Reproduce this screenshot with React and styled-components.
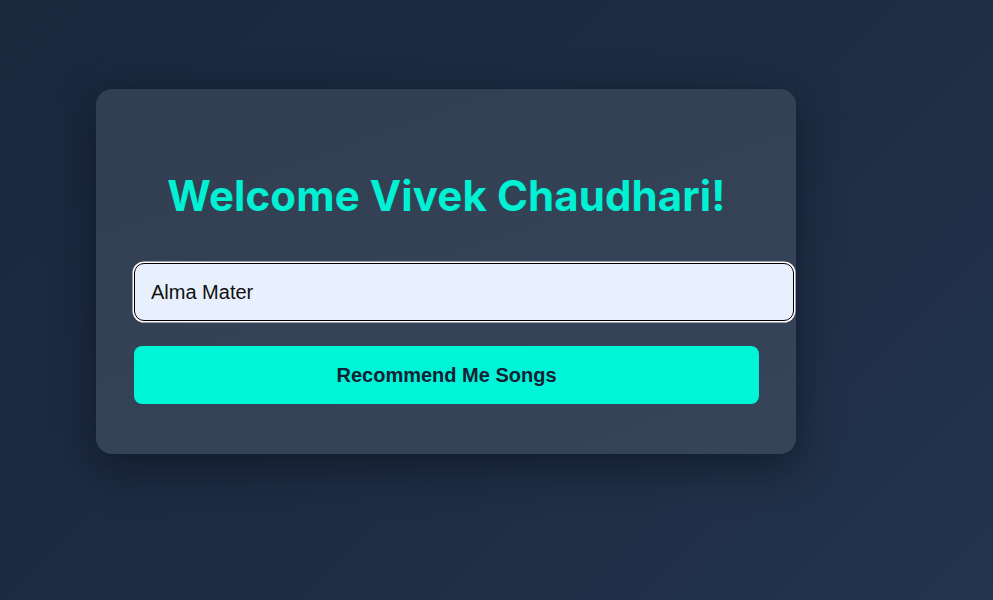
import styled, { createGlobalStyle } from "styled-components";

const GlobalStyle = createGlobalStyle`
  html, body {
    margin: 0;
    padding: 0;
  }
  body {
    min-height: 100vh;
    background: linear-gradient(135deg, #1a273d 0%, #1e2b42 50%, #23344d 100%);
    font-family: "Liberation Sans", Arial, sans-serif;
  }
`

const Page = styled.div`
  min-height: 100vh;
  box-sizing: border-box;
  padding: 89px 0 0 96px;
`
const Card = styled.div`
  width: 700px;
  box-sizing: border-box;
  padding: 38px 37px 50px 38px;
  border-radius: 16px;
  background: linear-gradient(160deg, #323f52 0%, #36445a 100%);
  box-shadow: 0 12px 40px rgba(8, 14, 26, 0.55);
  display: flex;
  flex-direction: column;
`
const Title = styled.h1`
  margin: 41px 0 0;
  height: 56px;
  line-height: 56px;
  font-family: Inter, "Noto Sans", sans-serif;
  font-size: 42px;
  font-weight: 700;
  letter-spacing: 0.1px;
  color: #00f0d4;
  text-align: center;
`
const Input = styled.input`
  margin-top: 39px;
  width: calc(100% + 35px);
  height: 58px;
  box-sizing: border-box;
  padding: 0 16px;
  border: 1.5px solid #000;
  border-radius: 10px;
  box-shadow: 0 0 0 1.5px #fff;
  outline: none;
  background: #e8effd;
  font-family: "Liberation Sans", Arial, sans-serif;
  font-size: 20px;
  color: #111;
`
const Button = styled.button`
  margin-top: 25px;
  height: 58px;
  border: none;
  border-radius: 8px;
  background: #00f5d8;
  color: #162033;
  font-family: "Liberation Sans", Arial, sans-serif;
  font-size: 20px;
  font-weight: 700;
  cursor: pointer;
`

export default function App() {
  return <>
    <GlobalStyle />
    <Page>
      <Card>
        <Title>Welcome Vivek Chaudhari!</Title>
        <Input defaultValue="Alma Mater" autoFocus />
        <Button>Recommend Me Songs</Button>
      </Card>
    </Page>
  </>
}
